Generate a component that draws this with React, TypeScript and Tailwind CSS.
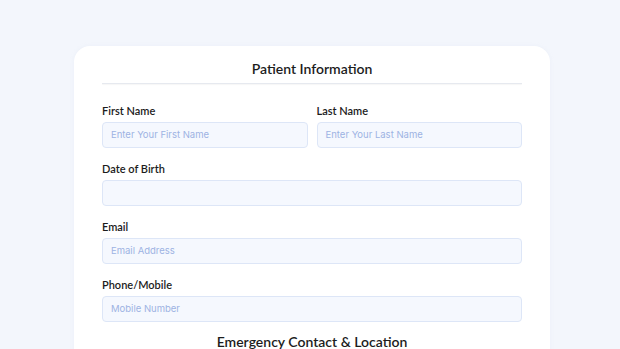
import React from "react";

function Field({ label, placeholder }: { label: string; placeholder?: string }) {
  return (
    <div className="flex flex-col flex-1">
      <label className="text-[11px] leading-[14px] font-semibold text-[#1c1c1c] mb-[4px]">{label}</label>
      <div className="h-[26px] rounded-[4px] border border-[#dde6f7] bg-[#f5f8fe] flex items-center px-[8px]">
        <span className="text-[9.5px] text-[#9db3e3] font-['Inter',sans-serif]">{placeholder}</span>
      </div>
    </div>
  );
}

export default function App() {
  return (
    <div className="w-[620px] h-[349px] overflow-hidden bg-[#f3f6fc] font-['Lato',sans-serif]">
      <div className="pt-[46px] pl-[74px]">
        <div className="w-[476px] bg-white rounded-[16px] px-[28px] pt-[13px] h-[320px] shadow-[0_0_4px_rgba(200,210,230,0.15)]">
          <h1 className="text-center text-[14px] leading-[20px] font-semibold text-[#1c1c1c]">Patient Information</h1>
          <div className="mt-[4px] h-[1px] bg-[#e6e9ef] shadow-[0_1px_1px_rgba(0,0,0,0.04)]" />
          <div className="mt-[20px] flex flex-col gap-[14px]">
            <div className="flex gap-[9px]">
              <Field label="First Name" placeholder="Enter Your First Name" />
              <Field label="Last Name" placeholder="Enter Your Last Name" />
            </div>
            <Field label="Date of Birth" />
            <Field label="Email" placeholder="Email Address" />
            <Field label="Phone/Mobile" placeholder="Mobile Number" />
          </div>
          <h2 className="mt-[10px] text-center text-[14px] leading-[20px] font-semibold text-[#1c1c1c]">Emergency Contact &amp; Location</h2>
        </div>
      </div>
    </div>
  );
}
